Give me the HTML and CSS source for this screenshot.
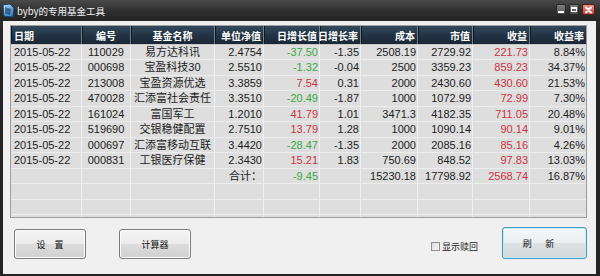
FILE: index.html
```html
<!DOCTYPE html>
<html lang="zh-CN">
<head>
<meta charset="utf-8">
<title>byby的专用基金工具</title>
<link rel="stylesheet" href="styles.css">
</head>
<body>
<div class="window">
  <div class="titlebar">
    <svg class="app-icon" width="13" height="15" viewBox="0 0 13 15">
      <defs>
        <linearGradient id="ig" x1="0" y1="0" x2="1" y2="1">
          <stop offset="0" stop-color="#bfe6ff"/>
          <stop offset="1" stop-color="#1f6fc0"/>
        </linearGradient>
      </defs>
      <path d="M1 2 L8 1 L12 5 L11 14 L2 13 Z" fill="url(#ig)" stroke="#0e3d73" stroke-width="0.8"/>
      <path d="M3 4 L9 6 L8 12 L3 11 Z" fill="#0d2a4d" opacity="0.55"/>
    </svg>
    <span class="title">byby的专用基金工具</span>
    <div class="winbtns">
      <span class="wb wb-min"><i></i></span>
      <span class="wb wb-max"><i></i></span>
      <span class="wb wb-close">
        <svg width="11" height="10" viewBox="0 0 11 10"><path d="M3 2.5 L8 7.5 M8 2.5 L3 7.5" stroke="#fff" stroke-width="1.8" stroke-linecap="round"/></svg>
      </span>
    </div>
  </div>
  <div class="client">
    <div class="grid">
      <div class="row head">
        <div class="c l">日期</div><div class="c m">编号</div><div class="c m">基金名称</div><div class="c r">单位净值</div><div class="c r">日增长值</div><div class="c r">日增长率</div><div class="c r">成本</div><div class="c r">市值</div><div class="c r">收益</div><div class="c r">收益率</div>
      </div>
      <div class="body">
        <div class="row"><div class="c l">2015-05-22</div><div class="c m">110029</div><div class="c m">易方达科讯</div><div class="c r">2.4754</div><div class="c r g">-37.50</div><div class="c r">-1.35</div><div class="c r">2508.19</div><div class="c r">2729.92</div><div class="c r red">221.73</div><div class="c r">8.84%</div></div>
        <div class="row"><div class="c l">2015-05-22</div><div class="c m">000698</div><div class="c m">宝盈科技30</div><div class="c r">2.5510</div><div class="c r g">-1.32</div><div class="c r">-0.04</div><div class="c r">2500</div><div class="c r">3359.23</div><div class="c r red">859.23</div><div class="c r">34.37%</div></div>
        <div class="row"><div class="c l">2015-05-22</div><div class="c m">213008</div><div class="c m">宝盈资源优选</div><div class="c r">3.3859</div><div class="c r red">7.54</div><div class="c r">0.31</div><div class="c r">2000</div><div class="c r">2430.60</div><div class="c r red">430.60</div><div class="c r">21.53%</div></div>
        <div class="row"><div class="c l">2015-05-22</div><div class="c m">470028</div><div class="c m">汇添富社会责任</div><div class="c r">3.3510</div><div class="c r g">-20.49</div><div class="c r">-1.87</div><div class="c r">1000</div><div class="c r">1072.99</div><div class="c r red">72.99</div><div class="c r">7.30%</div></div>
        <div class="row"><div class="c l">2015-05-22</div><div class="c m">161024</div><div class="c m">富国军工</div><div class="c r">1.2010</div><div class="c r red">41.79</div><div class="c r">1.01</div><div class="c r">3471.3</div><div class="c r">4182.35</div><div class="c r red">711.05</div><div class="c r">20.48%</div></div>
        <div class="row"><div class="c l">2015-05-22</div><div class="c m">519690</div><div class="c m">交银稳健配置</div><div class="c r">2.7510</div><div class="c r red">13.79</div><div class="c r">1.28</div><div class="c r">1000</div><div class="c r">1090.14</div><div class="c r red">90.14</div><div class="c r">9.01%</div></div>
        <div class="row"><div class="c l">2015-05-22</div><div class="c m">000697</div><div class="c m">汇添富移动互联</div><div class="c r">3.4420</div><div class="c r g">-28.47</div><div class="c r">-1.35</div><div class="c r">2000</div><div class="c r">2085.16</div><div class="c r red">85.16</div><div class="c r">4.26%</div></div>
        <div class="row"><div class="c l">2015-05-22</div><div class="c m">000831</div><div class="c m">工银医疗保健</div><div class="c r">2.3430</div><div class="c r red">15.21</div><div class="c r">1.83</div><div class="c r">750.69</div><div class="c r">848.52</div><div class="c r red">97.83</div><div class="c r">13.03%</div></div>
        <div class="row"><div class="c l"></div><div class="c m"></div><div class="c m"></div><div class="c r">合计：</div><div class="c r g">-9.45</div><div class="c r"></div><div class="c r">15230.18</div><div class="c r">17798.92</div><div class="c r red">2568.74</div><div class="c r">16.87%</div></div>
        <div class="row"><div class="c"></div><div class="c"></div><div class="c"></div><div class="c"></div><div class="c"></div><div class="c"></div><div class="c"></div><div class="c"></div><div class="c"></div><div class="c"></div></div>
        <div class="row"><div class="c"></div><div class="c"></div><div class="c"></div><div class="c"></div><div class="c"></div><div class="c"></div><div class="c"></div><div class="c"></div><div class="c"></div><div class="c"></div></div>
        <div class="row"><div class="c"></div><div class="c"></div><div class="c"></div><div class="c"></div><div class="c"></div><div class="c"></div><div class="c"></div><div class="c"></div><div class="c"></div><div class="c"></div></div>
      </div>
    </div>
    <div class="actions">
      <button class="btn btn-set">设&emsp;置</button>
      <button class="btn btn-calc">计算器</button>
      <label class="check"><span class="box"></span>显示赎回</label>
      <button class="btn btn-refresh">刷&ensp;&emsp;新</button>
    </div>
  </div>
</div>
</body>
</html>
```

FILE: styles.css
```css
* { box-sizing: border-box; }
html, body { margin: 0; padding: 0; }
body {
  width: 600px;
  height: 276px;
  overflow: hidden;
  background: #262626;
  font-family: "Liberation Sans", "Noto Sans CJK SC", sans-serif;
}
.window {
  width: 600px;
  height: 276px;
  display: flex;
  flex-direction: column;
  background: linear-gradient(#3e3e3e, #262626 30px, #232323);
}
.titlebar {
  height: 21px;
  flex: none;
  display: flex;
  align-items: center;
  padding: 0 5px 0 2px;
  background: linear-gradient(#4a4a4a, #303030 50%, #242424);
}
.app-icon { flex: none; display: block; margin-top: -1px; }
.title {
  margin-left: 2px;
  color: #f2f2f2;
  font-family: "Noto Sans CJK SC", sans-serif;
  font-size: 9.5px;
  line-height: 12px;
}
.winbtns {
  margin-left: auto;
  display: flex;
  align-items: center;
  gap: 3px;
  margin-top: -2px;
}
.wb {
  display: flex;
  align-items: center;
  justify-content: center;
  height: 11px;
  border-radius: 2px;
}
.wb-min, .wb-max {
  width: 10px;
  background: linear-gradient(#808080, #4e4e4e);
  border: 1px solid #2a2a2a;
}
.wb-min i { display: block; width: 6px; height: 2px; background: #fff; margin-top: 4px; }
.wb-max i { display: block; width: 6px; height: 5px; border: 1px solid #fff; border-top-width: 2px; }
.wb-close {
  width: 13px;
  background: linear-gradient(#ec8e82, #c8463a);
  border: 1px solid #5c1e18;
}
.client {
  flex: 1;
  margin: 0 4px 2px 3px;
  background: #f0f0f0;
  padding: 4px 9px 0 7px;
}
.grid {
  height: 193px;
  border: 1px solid #9e9e9e;
  background: #dedede;
  overflow: hidden;
  display: flex;
  flex-direction: column;
}
.row {
  display: grid;
  grid-template-columns: 71px 49px 84px 49px 56px 41px 57px 55px 57px 56px;
  flex: none;
}
.head {
  height: 19px;
  background: linear-gradient(#34485d, #223244 55%, #1a2634);
  border-bottom: 1px solid #c8c8c8;
}
.head .c {
  color: #ffffff;
  font-family: "Noto Sans CJK SC", sans-serif;
  font-weight: 700;
  font-size: 10px;
  overflow: visible;
  border-right: 1px solid #6f7f8f;
  box-shadow: inset 1px 0 0 #0f1822;
}
.head .c.r { padding-right: 2px; }
.head .c:last-child { border-right: none; }
.body { display: flex; flex-direction: column; }
.body .row {
  height: 16px;
  border-bottom: 1px solid #ececec;
}
.body .row:nth-child(odd) { height: 15px; }
.c {
  display: flex;
  align-items: center;
  white-space: nowrap;
  overflow: hidden;
  font-size: 11px;
  line-height: 13px;
  color: #1c1c1c;
  border-right: 1px solid #f0f0f0;
}
.c:last-child { border-right: none; }
.l { justify-content: flex-start; padding-left: 3px; }
.m { justify-content: center; }
.r { justify-content: flex-end; padding-right: 1px; }
.g { color: #3aa83f; }
.red { color: #cc3341; }
.actions {
  display: flex;
  align-items: flex-start;
  margin-top: 9px;
  padding-left: 4px;
}
.btn {
  font-family: "Noto Sans CJK SC", sans-serif;
  font-size: 9px;
  color: #111;
  border: 1px solid #7c7c7c;
  border-radius: 3px;
  background: linear-gradient(#f4f4f4, #ececec 48%, #dcdcdc 52%, #d0d0d0);
  box-shadow: inset 0 0 0 1px #fbfbfb;
  padding: 0;
  display: flex;
  align-items: center;
  justify-content: center;
}
.btn-set { width: 72px; height: 30px; margin-top: 2px; }
.btn-calc { width: 72px; height: 30px; margin: 2px 0 0 33px; }
.btn-refresh {
  width: 85px;
  height: 32px;
  border-color: #4196c6;
  box-shadow: inset 0 0 0 1px #c9ecfb;
  background: linear-gradient(#f5f8fa, #eceff1 48%, #dde1e4 52%, #d3d8db);
  padding-right: 12px;
}
.check {
  margin: 13px 24px 0 auto;
  display: flex;
  align-items: center;
  font-family: "Noto Sans CJK SC", sans-serif;
  font-size: 9px;
  line-height: 13px;
  color: #222;
}
.box {
  width: 9px;
  height: 9px;
  margin-right: 2px;
  border: 1px solid #8e8f8f;
  background: linear-gradient(135deg, #dcdcdc, #f6f6f6);
}
```
